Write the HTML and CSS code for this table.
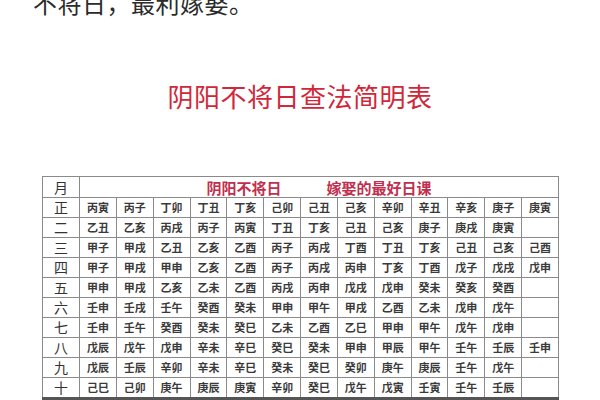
FILE: index.html
```html
<!DOCTYPE html>
<html lang="zh">
<head>
<meta charset="utf-8">
<link rel="stylesheet" href="styles.css">
</head>
<body>
<p class="lead">不将日，最利嫁娶。</p>
<h1 class="title">阴阳不将日查法简明表</h1>
<table class="grid">
  <colgroup>
    <col class="c-month">
    <col span="13">
  </colgroup>
  <tr class="head">
    <th class="m">月</th>
    <th colspan="13" class="banner"><span>阴阳不将日</span><span>嫁娶的最好日课</span></th>
  </tr>
  <tr><th class="m">正</th><td>丙寅</td><td>丙子</td><td>丁卯</td><td>丁丑</td><td>丁亥</td><td>己卯</td><td>己丑</td><td>己亥</td><td>辛卯</td><td>辛丑</td><td>辛亥</td><td>庚子</td><td>庚寅</td></tr>
  <tr><th class="m">二</th><td>乙丑</td><td>乙亥</td><td>丙戌</td><td>丙子</td><td>丙寅</td><td>丁丑</td><td>丁亥</td><td>己丑</td><td>己亥</td><td>庚子</td><td>庚戌</td><td>庚寅</td><td></td></tr>
  <tr><th class="m">三</th><td>甲子</td><td>甲戌</td><td>乙丑</td><td>乙亥</td><td>乙酉</td><td>丙子</td><td>丙戌</td><td>丁酉</td><td>丁丑</td><td>丁亥</td><td>己丑</td><td>己亥</td><td>己酉</td></tr>
  <tr><th class="m">四</th><td>甲子</td><td>甲戌</td><td>甲申</td><td>乙亥</td><td>乙酉</td><td>丙子</td><td>丙戌</td><td>丙申</td><td>丁亥</td><td>丁酉</td><td>戊子</td><td>戊戌</td><td>戊申</td></tr>
  <tr><th class="m">五</th><td>甲申</td><td>甲戌</td><td>乙亥</td><td>乙未</td><td>乙酉</td><td>丙戌</td><td>丙申</td><td>戊戌</td><td>戊申</td><td>癸未</td><td>癸亥</td><td>癸酉</td><td></td></tr>
  <tr><th class="m">六</th><td>壬申</td><td>壬戌</td><td>壬午</td><td>癸酉</td><td>癸未</td><td>甲申</td><td>甲午</td><td>甲戌</td><td>乙酉</td><td>乙未</td><td>戊申</td><td>戊午</td><td></td></tr>
  <tr><th class="m">七</th><td>壬申</td><td>壬午</td><td>癸酉</td><td>癸未</td><td>癸巳</td><td>乙未</td><td>乙酉</td><td>乙巳</td><td>甲申</td><td>甲午</td><td>戊午</td><td>戊申</td><td></td></tr>
  <tr><th class="m">八</th><td>戊辰</td><td>戊午</td><td>戊申</td><td>辛未</td><td>辛巳</td><td>癸巳</td><td>癸未</td><td>甲申</td><td>甲辰</td><td>甲午</td><td>壬午</td><td>壬辰</td><td>壬申</td></tr>
  <tr><th class="m">九</th><td>戊辰</td><td>壬辰</td><td>辛卯</td><td>辛未</td><td>辛巳</td><td>癸未</td><td>癸巳</td><td>癸卯</td><td>庚午</td><td>庚辰</td><td>壬午</td><td>戊午</td><td></td></tr>
  <tr class="last"><th class="m">十</th><td>己巳</td><td>己卯</td><td>庚午</td><td>庚辰</td><td>庚寅</td><td>辛卯</td><td>癸巳</td><td>戊午</td><td>戊寅</td><td>壬寅</td><td>壬午</td><td>壬辰</td><td></td></tr>
</table>
</body>
</html>
```
FILE: styles.css
```css
html, body {
  margin: 0;
  padding: 0;
  background: #ffffff;
  overflow: hidden;
}
body {
  width: 600px;
  height: 400px;
  font-family: "Noto Sans CJK SC", "Noto Sans", sans-serif;
  color: #333;
}
.lead {
  margin: -14px 0 0 33px;
  font-size: 24px;
  line-height: 34px;
  letter-spacing: 0.5px;
  color: #2b2b2b;
}
.title {
  margin: 60px 0 0 0;
  text-align: center;
  font-size: 26px;
  line-height: 32px;
  font-weight: 400;
  color: #d0283a;
  letter-spacing: 0.5px;
}
.grid {
  margin: 64px 0 0 42px;
  width: 517px;
  border-collapse: collapse;
  table-layout: fixed;
  border: 1px solid #666;
  border-bottom: 3px solid #555;
}
.c-month {
  width: 37px;
}
.grid th, .grid td {
  border: 1px solid #8a8a8a;
  padding: 0;
  height: 19px;
  text-align: center;
  vertical-align: middle;
  line-height: 19px;
  white-space: nowrap;
  overflow: hidden;
}
.grid td {
  font-size: 11px;
  font-weight: 700;
  color: #3a3a3a;
}
.grid th.m {
  font-family: "Noto Sans CJK SC", sans-serif;
  font-size: 14px;
  font-weight: 400;
  color: #333;
}
.grid tr.head th {
  height: 20px;
}
.banner {
  font-size: 15px;
  font-weight: 700;
  color: #c0304e;
  letter-spacing: 0px;
}
.banner span + span {
  margin-left: 45px;
}
```
